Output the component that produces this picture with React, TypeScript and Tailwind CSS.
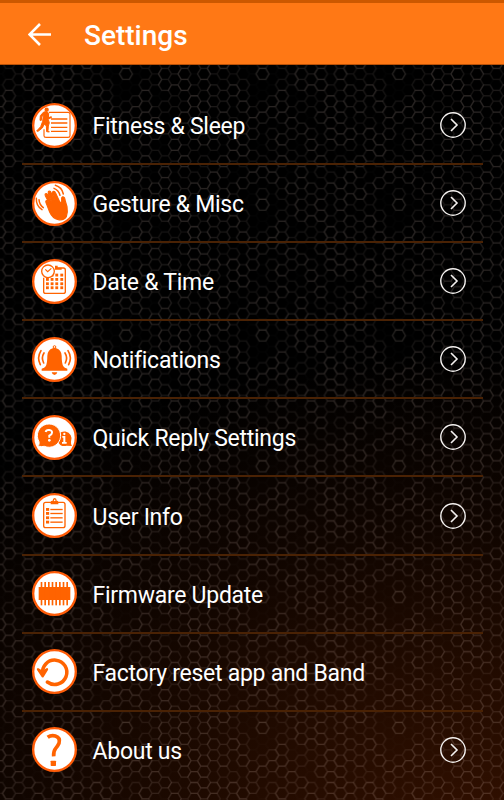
import { ReactNode } from "react";

const ORANGE = "#ff6300";

// Stroke strength of every cell in one honeycomb tile: 14 columns of 12 cells.
const CELLS = [
  "300120001201",
  "001201101200",
  "012210212011",
  "100122010021",
  "220102001210",
  "211001210022",
  "121120012102",
  "012212100120",
  "210121201012",
  "022002101221",
  "102211002102",
  "120012210011",
  "011200121020",
  "000122011200",
];

const COL = 9.75;
const ROW = 10.9;
const TILE_W = COL * 14;
const TILE_H = ROW * 12;
const OPACITY = [0.012, 0.07, 0.1, 0.13];

function hexagon(x: number, y: number) {
  return `M${x - 6.5} ${y}l3.25 -5.45h6.5l3.25 5.45l-3.25 5.45h-6.5z`;
}

// One path per level, so that shared edges are not painted twice.
function levelPath(level: number) {
  return CELLS.flatMap((column, c) =>
    column.split("").flatMap((value, r) => {
      if (Number(value) !== level) return [];
      const x = ((c + 1) % 14) * COL;
      const y = ((r + 1) % 12) * ROW + (c % 2) * (ROW / 2);
      // Cells on the edge are drawn again on the opposite side.
      const xs = x === 0 ? [0, TILE_W] : [x];
      const ys = y < ROW ? [y, y + TILE_H] : [y];
      return xs.flatMap((px) => ys.map((py) => hexagon(px, py)));
    }),
  ).join("");
}

function Honeycomb() {
  return (
    <svg className="absolute inset-0 h-full w-full" aria-hidden="true">
      <defs>
        <pattern
          id="honeycomb"
          x={399 - TILE_W - COL}
          y={74 - ROW}
          width={TILE_W}
          height={TILE_H}
          patternUnits="userSpaceOnUse"
        >
          {OPACITY.map((opacity, level) => (
            <path
              key={level}
              d={levelPath(level)}
              fill="none"
              stroke="#ffe6d9"
              strokeWidth="1.3"
              opacity={opacity}
            />
          ))}
        </pattern>
      </defs>
      <rect width="100%" height="100%" fill="url(#honeycomb)" />
    </svg>
  );
}

function Badge({ children }: { children: ReactNode }) {
  return (
    <svg className="h-[45px] w-[45px] shrink-0" viewBox="25 39 135 135" fill={ORANGE}>
      <circle cx="92.5" cy="106.5" r="64" fill="#fff" stroke="#ff5c08" strokeWidth="7" />
      {children}
    </svg>
  );
}

function FitnessIcon() {
  return (
    <Badge>
      <path
        d="M76 67H133Q139 67 139 73V137Q139 142 133 142H67Q61 142 61 137V118"
        fill="none"
        stroke={ORANGE}
        strokeWidth="3.5"
      />
      <path
        d="M82 87H131M82 99H131M82 112H131M82 124H131"
        stroke={ORANGE}
        strokeWidth="4"
        fill="none"
      />
      <circle cx="69" cy="59" r="6.5" />
      <path
        d="M60 66L70 65L75 70L74 89L77 98L74 108L73 122L77 126L69 125L68 108L62 102L56 114L43 124L39 123L51 110L57 94L59 76L54 80L53 91L49 91L50 77Z"
        stroke={ORANGE}
        strokeWidth="3"
      />
      <path d="M73 73L77 81L83 78L85 83L76 88L70 80Z" />
    </Badge>
  );
}

function GestureIcon() {
  return (
    <Badge>
      <path
        d="M78 132L67 104Q65 98 69 98Q72 98 75 104L79 110L65 83Q63 77 67 77Q70 76 73 82L84 103L74 75Q73 69 77 69Q81 69 83 75L93 99L87 76Q86 70 90 70Q94 70 96 76L108 101L114 106L114 90Q115 85 120 87Q124 89 124 96L130 116Q133 133 128 146Q121 158 104 155Q86 151 78 132Z"
        stroke={ORANGE}
        strokeWidth="3.5"
      />
      <g fill="none" stroke={ORANGE} strokeWidth="4.5" strokeLinecap="round">
        <path d="M91 61Q105 66 109 82M95 52Q115 58 119 78" />
        <path d="M46 95Q47 110 59 119M38 91Q37 114 55 125" />
      </g>
    </Badge>
  );
}

function DateIcon() {
  return (
    <Badge>
      <path
        d="M94 66H119Q125 66 125 72V137Q125 142 119 142H66Q60 142 60 137V95"
        fill="none"
        stroke={ORANGE}
        strokeWidth="4"
      />
      <path d="M94 59H102V65H114V71H94Z" />
      {[83, 96, 109, 121].map((y) =>
        [67, 81, 95, 110].map((x) => <rect key={`${x}-${y}`} x={x} y={y} width="8.5" height="8.5" />),
      )}
      <circle cx="73" cy="76" r="19" fill="#fff" stroke={ORANGE} strokeWidth="4" />
      <path d="M65 70L72 77L83 67" fill="none" stroke={ORANGE} strokeWidth="3.5" />
    </Badge>
  );
}

function BellIcon() {
  return (
    <Badge>
      <circle cx="92.5" cy="69" r="4" fill="none" stroke={ORANGE} strokeWidth="3" />
      <path d="M87 73Q92 69 98 73Q113 78 114 95Q114 118 119 127Q122 132 131 134V140H54V134Q63 132 66 127Q71 118 71 95Q72 78 87 73Z" />
      <path d="M84 145H101Q99 153 92.5 153Q86 153 84 145Z" />
      <g fill="none" stroke={ORANGE} strokeWidth="5" strokeLinecap="round">
        <path d="M61 87Q52 101 60 117M52 80Q39 101 50 122" />
        <path d="M124 87Q133 101 125 117M133 80Q146 101 135 122" />
      </g>
    </Badge>
  );
}

function ReplyIcon() {
  return (
    <Badge>
      <path d="M145 132L129 131A22 22 0 1 1 142 119Q141 127 145 132Z" />
      <path
        d="M42 132Q48 128 46 119A35 35 0 1 1 62 133Q55 135 42 132Z"
        stroke="#fff"
        strokeWidth="3"
      />
      <path
        d="M66 90Q67 83 77 84Q86 85 85 92Q85 97 77 101V107"
        fill="none"
        stroke="#fff"
        strokeWidth="6"
      />
      <circle cx="77" cy="115" r="4" fill="#fff" />
      <path d="M116 102H125V120H129V125H115V120H119V107H116Z" fill="#fff" />
      <circle cx="122" cy="96" r="3.5" fill="#fff" />
    </Badge>
  );
}

function UserInfoIcon() {
  return (
    <Badge>
      <rect
        x="60"
        y="67"
        width="64"
        height="76"
        rx="6"
        fill="none"
        stroke={ORANGE}
        strokeWidth="4"
      />
      <path d="M81 73V66Q81 62 87 62Q87 54 93 54Q99 54 99 62Q104 62 104 66V73Z" />
      <circle cx="93" cy="61" r="2.5" fill="#fff" />
      {[84, 96, 109, 122].map((y) => (
        <g key={y}>
          <rect x="67" y={y} width="9.5" height="8.5" />
          <rect x="80" y={y + 2.5} width="37" height="4" />
        </g>
      ))}
    </Badge>
  );
}

function ChipIcon() {
  return (
    <Badge>
      <rect x="45" y="87" width="95" height="39" />
      {[51, 62, 73, 84, 95, 106, 117, 128].map((x) => (
        <rect key={x} x={x} y="72" width="5" height="70" />
      ))}
    </Badge>
  );
}

function ResetIcon() {
  return (
    <Badge>
      <path
        d="M57 115A36.5 36.5 0 1 1 71 138"
        fill="none"
        stroke={ORANGE}
        strokeWidth="10.5"
        strokeLinecap="round"
      />
      <path
        d="M43 100L56 108L70 100L57 121Z"
        stroke={ORANGE}
        strokeWidth="7"
        strokeLinejoin="round"
      />
    </Badge>
  );
}

function AboutIcon() {
  return (
    <Badge>
      <path
        d="M72 70Q83 62 95 66Q111 71 106 88Q103 95 96 103Q89 111 90 127"
        fill="none"
        stroke={ORANGE}
        strokeWidth="11"
      />
      <rect x="81" y="140" width="16" height="16" rx="2" />
    </Badge>
  );
}

function NextIcon() {
  return (
    <svg className="h-[26px] w-[26px] shrink-0" viewBox="0 0 26 26" fill="none" stroke="#f4f1ef">
      <circle cx="13" cy="13" r="12.2" strokeWidth="1.4" />
      <path d="M11 7L17 13L11 19" strokeWidth="1.6" />
    </svg>
  );
}

const items = [
  { label: "Fitness & Sleep", icon: <FitnessIcon />, next: true },
  { label: "Gesture & Misc", icon: <GestureIcon />, next: true },
  { label: "Date & Time", icon: <DateIcon />, next: true },
  { label: "Notifications", icon: <BellIcon />, next: true },
  { label: "Quick Reply Settings", icon: <ReplyIcon />, next: true },
  { label: "User Info", icon: <UserInfoIcon />, next: true },
  { label: "Firmware Update", icon: <ChipIcon />, next: false },
  { label: "Factory reset app and Band", icon: <ResetIcon />, next: false },
  { label: "About us", icon: <AboutIcon />, next: true },
];

export default function App() {
  return (
    <main className="relative flex h-[800px] w-[504px] flex-col overflow-hidden bg-black bg-[radial-gradient(ellipse_760px_480px_at_98%_104%,#321000_0%,#220b00_32%,#100500_64%,#000_100%)] font-['Roboto',sans-serif] text-white">
      <Honeycomb />
      <header className="relative flex h-[65px] shrink-0 items-center border-t-3 border-b border-t-[#cc5800] border-b-[#b85108] bg-[#ff7815] pl-7 pt-1">
        <button type="button" aria-label="Back" className="-mt-0.5">
          <svg className="h-[23px] w-6" viewBox="0 0 24 23" fill="none" stroke="#fff">
            <path d="M12 1L1.5 11.5L12 22M1.5 11.5H23" strokeWidth="2.6" />
          </svg>
        </button>
        <h1 className="ml-8 text-[28px] leading-8 font-medium">Settings</h1>
      </header>
      <ul className="relative ml-[22px] w-[461px] pt-[22px]">
        {items.map(({ label, icon, next }) => (
          <li
            key={label}
            className="flex h-[78.1px] items-center border-b-2 border-[#4a2204] pr-[17px] pl-[10px] last:border-transparent"
          >
            {icon}
            <span className="mr-auto ml-[15.5px] pt-[4px] text-[23px] leading-7 tracking-[-0.27px]">
              {label}
            </span>
            {next && <NextIcon />}
          </li>
        ))}
      </ul>
    </main>
  );
}
